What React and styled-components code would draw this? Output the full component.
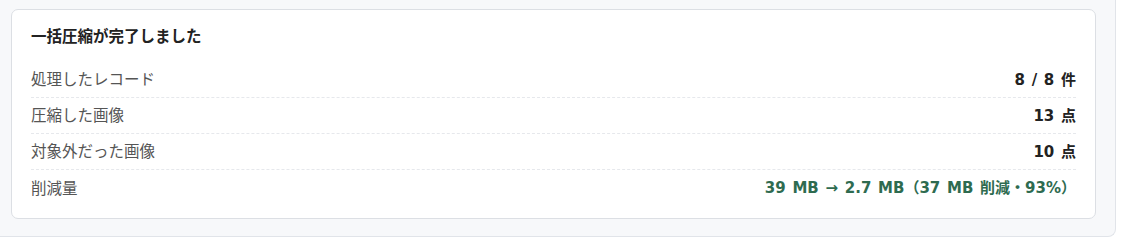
import React from "react";
import styled, { createGlobalStyle } from "styled-components";

const Global = createGlobalStyle`
  html, body { margin: 0; padding: 0; background: #ffffff; }
  body { font-family: "Noto Sans CJK JP", "Noto Sans", sans-serif; }
`;

const Panel = styled.div`
  box-sizing: border-box;
  width: 1116px;
  height: 237px;
  padding: 9px 20px 0 11px;
  background: #f7f8fa;
  border-right: 1px solid #e1e4e9;
  border-bottom: 1px solid #e1e4e9;
  border-bottom-right-radius: 8px;
`;

const Card = styled.section`
  box-sizing: border-box;
  width: 1085px;
  background: #ffffff;
  border: 1px solid #dcdfe4;
  border-radius: 7px;
  padding: 14px 19px 12px 19px;
`;

const Title = styled.h2`
  margin: 0 0 16px 0;
  font-size: 15.5px;
  line-height: 22px;
  font-weight: 700;
  color: #222222;
`;

const Row = styled.div`
  display: flex;
  justify-content: space-between;
  align-items: center;
  height: 36px;
  padding-bottom: 3px;
  box-sizing: border-box;
  border-bottom: 1px dashed #e6e8ec;
  &:last-child { border-bottom: none; }
`;

const Label = styled.span`
  font-size: 15.5px;
  color: #555555;
`;

const Value = styled.span`
  font-family: "DejaVu Sans", "Noto Sans CJK JP", sans-serif;
  font-size: 15px;
  word-spacing: 1.5px;
  font-weight: 700;
  color: ${(p) => (p.$accent ? "#2e6b50" : "#222222")};
`;

const rows = [
  { label: "処理したレコード", value: "8 / 8 件" },
  { label: "圧縮した画像", value: "13 点" },
  { label: "対象外だった画像", value: "10 点" },
  { label: "削減量", value: "39 MB → 2.7 MB（37 MB 削減・93%）", accent: true },
];

export default function App() {
  return (
    <>
      <Global />
      <Panel>
        <Card>
          <Title>一括圧縮が完了しました</Title>
          {rows.map((r) => (
            <Row key={r.label}>
              <Label>{r.label}</Label>
              <Value $accent={r.accent}>{r.value}</Value>
            </Row>
          ))}
        </Card>
      </Panel>
    </>
  );
}
